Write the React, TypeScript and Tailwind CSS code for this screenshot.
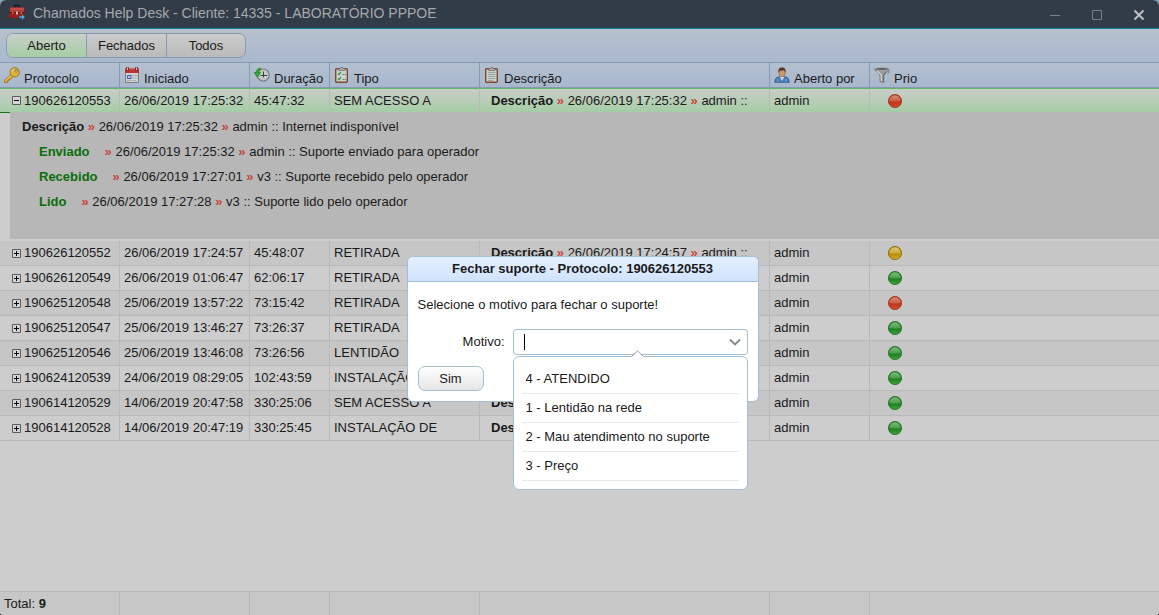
import React from 'react';

type Prio = 'red' | 'yellow' | 'green';

interface Ticket {
  id: string;
  start: string;
  duration: string;
  type: string;
  prio: Prio;
}

const tickets: Ticket[] = [
  { id: '190626120553', start: '26/06/2019 17:25:32', duration: '45:47:32', type: 'SEM ACESSO A', prio: 'red' },
  { id: '190626120552', start: '26/06/2019 17:24:57', duration: '45:48:07', type: 'RETIRADA', prio: 'yellow' },
  { id: '190626120549', start: '26/06/2019 01:06:47', duration: '62:06:17', type: 'RETIRADA', prio: 'green' },
  { id: '190625120548', start: '25/06/2019 13:57:22', duration: '73:15:42', type: 'RETIRADA', prio: 'red' },
  { id: '190625120547', start: '25/06/2019 13:46:27', duration: '73:26:37', type: 'RETIRADA', prio: 'green' },
  { id: '190625120546', start: '25/06/2019 13:46:08', duration: '73:26:56', type: 'LENTIDÃO', prio: 'green' },
  { id: '190624120539', start: '24/06/2019 08:29:05', duration: '102:43:59', type: 'INSTALAÇÃO DE', prio: 'green' },
  { id: '190614120529', start: '14/06/2019 20:47:58', duration: '330:25:06', type: 'SEM ACESSO A', prio: 'green' },
  { id: '190614120528', start: '14/06/2019 20:47:19', duration: '330:25:45', type: 'INSTALAÇÃO DE', prio: 'green' },
];

const history = [
  { label: 'Enviado', date: '26/06/2019 17:25:32', text: 'admin :: Suporte enviado para operador' },
  { label: 'Recebido', date: '26/06/2019 17:27:01', text: 'v3 :: Suporte recebido pelo operador' },
  { label: 'Lido', date: '26/06/2019 17:27:28', text: 'v3 :: Suporte lido pelo operador' },
];

const reasons = ['4 - ATENDIDO', '1 - Lentidão na rede', '2 - Mau atendimento no suporte', '3 - Preço'];

const Arrow = () => <b className="text-[#c8453c]">»</b>;

const ToolboxIcon = () => (
  <svg width="16" height="16" viewBox="0 0 16 16" aria-hidden="true">
    <path d="M5.500 4V2.500q0-1 1-1h3q1 0 1 1V4" fill="none" stroke="#10161c" strokeWidth="1.300" />
    <path d="M1 4.500q0-1 1-1h12q1 0 1 1V14H1z" fill="#a3201d" />
    <path d="M1 4.500q0-1 1-1h12q1 0 1 1V8H1z" fill="#bb3a33" />
    <path d="M1.500 5h13" stroke="#cd6a62" strokeWidth=".8" />
    <path d="M0 8.500h16" stroke="#5e1310" />
    <path d="M0 9.500h15.500v4H0z" fill="#9a1d1a" />
    <path d="M7 7.500h2v3H7z" fill="#c9bdbb" />
    <path d="M3 8h1.500v1.500H3zM11.500 8H13v1.500h-1.500z" fill="#c08a84" />
    <path d="M10 12h3v-2l3 3-3 3v-2h-3z" fill="#5aa9d6" stroke="#27506b" strokeWidth=".5" />
  </svg>
);

const KeyIcon = () => (
  <svg width="16" height="16" viewBox="0 0 16 16" aria-hidden="true">
    <path d="M7.300 7.200L.6 13.300v2.200h2.700v-1.500h1.500v-1.600h1.600l2.800-2.900z" fill="#d9aa2c" stroke="#94701a" strokeWidth=".8" />
    <circle cx="10.800" cy="5.200" r="4.600" fill="#deb43a" stroke="#94701a" strokeWidth=".9" />
    <path d="M7.700 5a3.200 3.200 0 013-2.900" stroke="#f0d67c" fill="none" />
    <circle cx="12.200" cy="3.900" r="1.400" fill="#b1bdd0" stroke="#94701a" strokeWidth=".7" />
    <path d="M1.500 13.600l6-5.500" stroke="#efd06c" strokeWidth=".8" />
  </svg>
);

const CalendarIcon = () => (
  <svg width="16" height="16" viewBox="0 0 16 16" aria-hidden="true">
    <path d="M1.500 2.500h13v13h-13z" fill="#d0d0d0" stroke="#7d7d7d" />
    <path d="M1 1.500h14V6H1z" fill="#b93431" />
    <path d="M1.500 2h13" stroke="#cf6560" strokeWidth=".8" />
    <path d="M3.500 0v3.500M12.500 0v3.500" stroke="#701d1b" strokeWidth="2.400" />
    <path d="M3.500 .5v2.500M12.500 .5v2.500" stroke="#d4c4c2" strokeWidth="1" />
    <path d="M3.500 8.500h3.500v3H3.500z" fill="#b8c8e4" stroke="#3a5cab" />
    <path d="M8.500 8.500h1M10.500 8.500h1M12.500 8.500h1M8.500 11h1M10.500 11h1M12.500 11h1M3.500 13.500h1M5.500 13.500h1M8.500 13.500h1M10.500 13.500h1" stroke="#8d8d8d" />
  </svg>
);

const HistoryIcon = () => (
  <svg width="16" height="16" viewBox="0 0 16 16" aria-hidden="true">
    <circle cx="9.200" cy="8" r="6" fill="#c7cccb" stroke="#747e7c" strokeWidth="1.200" />
    <circle cx="9.200" cy="8" r="4.300" fill="none" stroke="#a2aaa8" strokeWidth=".7" strokeDasharray="1 1.250" />
    <path d="M9.500 4.500v6M6.500 8.500h6.500" fill="none" stroke="#37413e" />
    <path d="M6.800 1C3.200 1.500 2.200 3.400 2.100 5.500H0l3.400 4.700 3.300-4.700H4.800c.1-1.500.6-2.400 2-3z" fill="#35a735" stroke="#187218" strokeWidth=".6" />
  </svg>
);

const ClipboardIcon = ({ checks }: { checks?: boolean }) => (
  <svg width="16" height="16" viewBox="0 0 16 16" aria-hidden="true">
    <rect x="1.700" y="1.700" width="11.600" height="13.600" rx="1" fill="#cbd0cd" stroke="#7a4930" strokeWidth="1.400" />
    <path d="M4.500 3.500V1.500h2L7 .5h1.500l.5 1h2v2z" fill="#aaa" stroke="#68645f" strokeWidth=".7" />
    {checks ? (
      <>
        <path d="M4 6.500l1 1 2-2.300M4 11.500l1 1 2-2.300" fill="none" stroke="#249d2a" strokeWidth="1.200" />
        <path d="M8.500 7.500H12M8.500 12.500H12" stroke="#777f7b" strokeDasharray="1.500 .5" />
      </>
    ) : (
      <path d="M4 5.500h7.500M4 7.500h7.500M4 9.500h7.500M4 11.500h7.500M4 13.500h5" stroke="#95a49c" strokeWidth=".9" />
    )}
  </svg>
);

const UserIcon = () => (
  <svg width="16" height="16" viewBox="0 0 16 16" aria-hidden="true">
    <path d="M.8 15.300c0-3.300 1.300-5 4.200-5.500h6c2.900.5 4.200 2.200 4.200 5.500z" fill="#477fb8" stroke="#285681" strokeWidth=".8" />
    <path d="M5.500 9.500L8 14l2.500-4.500z" fill="#d0d6dc" />
    <path d="M3.700 12v3M12.300 12v3" stroke="#79a5d1" />
    <ellipse cx="8" cy="5.700" rx="3.100" ry="4" fill="#cd9a6d" stroke="#8b5a33" strokeWidth=".6" />
    <path d="M4.500 6C3.800 2.300 5.300.4 8 .4s4.200 1.900 3.500 5.600c-.5-1.700-1-2.600-1.800-2.700-1.400.6-2.600.6-3.800.2C5.200 4 4.900 4.800 4.500 6z" fill="#513522" />
  </svg>
);

const FunnelIcon = () => (
  <svg width="16" height="16" viewBox="0 0 16 16" aria-hidden="true">
    <path d="M.5 2.500L6 8v6.500l3.800 1V8.200l5.200-5.700z" fill="#9a9a9a" stroke="#5b5b5b" strokeWidth=".7" />
    <path d="M3 4l4.300 4v6.300" stroke="#d9d9d9" strokeWidth="1.200" fill="none" />
    <path d="M12.500 4.500L9.300 8v6" stroke="#6c6c6c" strokeWidth=".8" fill="none" />
    <ellipse cx="7.900" cy="2" rx="7.300" ry="1.500" fill="#5f5f5f" stroke="#adadad" strokeWidth=".9" />
    <path d="M14.200 2.800c1.500 1.500 1 3.500-.7 3.700" stroke="#6c6c6c" strokeWidth=".8" fill="none" />
  </svg>
);

const balls: Record<Prio, [string, string, string, string]> = {
  red: ['#d98a74', '#bc3018', '#d44f2c', '#963321'],
  yellow: ['#dccb76', '#b88a00', '#d5ab18', '#806210'],
  green: ['#7cbd7c', '#1c7c20', '#3aa53a', '#246b27'],
};

const Ball = ({ prio }: { prio: Prio }) => {
  const [top, mid, low, edge] = balls[prio];
  return (
    <svg width="16" height="16" viewBox="0 0 16 16" role="img" aria-label={prio} className="block">
      <defs>
        <linearGradient id={'ball-' + prio} x2="0" y2="1">
          <stop offset="0" stopColor={low} />
          <stop offset="1" stopColor={low} />
        </linearGradient>
        <linearGradient id={'shine-' + prio} x2="0" y2="1">
          <stop offset="0" stopColor={top} />
          <stop offset="1" stopColor={top} stopOpacity=".45" />
        </linearGradient>
        <linearGradient id={'base-' + prio} x2="0" y2="1">
          <stop offset="0" stopColor={mid} />
          <stop offset=".5" stopColor={mid} />
          <stop offset="1" stopColor={low} />
        </linearGradient>
      </defs>
      <circle cx="8" cy="8" r="6.600" fill={'url(#base-' + prio + ')'} stroke={edge} strokeWidth=".8" />
      <path d="M2.200 8a5.800 5.800 0 0111.600 0Q8 9.200 2.200 8z" fill={'url(#shine-' + prio + ')'} />
    </svg>
  );
};

const Toggle = ({ open }: { open: boolean }) => (
  <button type="button" aria-label={open ? 'Recolher' : 'Expandir'} className="block">
    <svg width="9" height="9" viewBox="0 0 9 9" className="block">
      <path d="M.5.5h8v8h-8z" fill="#d4d4d4" stroke="#5c5c5c" />
      <path d={open ? 'M2 4.500h5' : 'M2 4.500h5M4.500 2v5'} stroke="#000" />
    </svg>
  </button>
);

const columns: { title: string; icon: React.ReactNode }[] = [
  { title: 'Protocolo', icon: <KeyIcon /> },
  { title: 'Iniciado', icon: <CalendarIcon /> },
  { title: 'Duração', icon: <HistoryIcon /> },
  { title: 'Tipo', icon: <ClipboardIcon checks /> },
  { title: 'Descrição', icon: <ClipboardIcon /> },
  { title: 'Aberto por', icon: <UserIcon /> },
  { title: 'Prio', icon: <FunnelIcon /> },
];

function TicketRow({ ticket, index }: { ticket: Ticket; index: number }) {
  const open = index === 0;
  const row = open
    ? 'h-6 bg-linear-to-b from-[#cccccc] to-[#a5cda5]'
    : index % 2
      ? 'h-[25px] bg-[#c6c6c6]'
      : 'h-[25px] bg-[#cdcdcd]';
  const edge = open ? 'border-t border-t-[#5fbb5f]' : 'border-b border-b-[#b9b9b9]';
  const cell = 'overflow-hidden whitespace-nowrap border-r border-r-[#b9b9b9] px-1 py-0 ' + edge;
  return (
    <tr className={row}>
      <td className={cell}>
        <div className="flex items-center gap-[3px] pl-2">
          <Toggle open={open} />
          {ticket.id}
        </div>
      </td>
      <td className={cell}>{ticket.start}</td>
      <td className={cell}>{ticket.duration}</td>
      <td className={cell}>{ticket.type}</td>
      <td className={cell}>
        <div className="pl-[7px]">
          <b>Descrição</b> <Arrow /> {ticket.start} <Arrow /> admin ::
        </div>
      </td>
      <td className={cell}>admin</td>
      <td className={'py-0 pl-[17px] ' + edge}>
        <Ball prio={ticket.prio} />
      </td>
    </tr>
  );
}

export default function App() {
  return (
    <div className="bg-linear-to-b from-[#7fa3bd] to-[#111111]">
      <div className="relative flex min-h-screen flex-col overflow-hidden rounded-t-md rounded-b-[3px] bg-[#cdcdcd] font-['Liberation_Sans',Arial,sans-serif] text-[13px] leading-4 text-[#1a1a1a]">
        <header className="flex h-[29px] items-center border-b border-[#0f7f95] bg-[#323c48] pb-1 pl-[9px] pr-3.5 text-[#a6a9ad]">
          <ToolboxIcon />
          <h1 className="ml-2 flex-1 pt-0.5 text-sm leading-4">Chamados Help Desk - Cliente: 14335 - LABORATÓRIO PPPOE</h1>
          <div className="flex items-center gap-[30px] pt-1.5">
            <button type="button" aria-label="Minimizar">
              <svg width="12" height="12" viewBox="0 0 12 12"><path d="M1 6.500h10" stroke="#7c8084" /></svg>
            </button>
            <button type="button" aria-label="Maximizar">
              <svg width="12" height="12" viewBox="0 0 12 12"><path d="M1.500 1.500h9v9h-9z" fill="none" stroke="#7c8084" /></svg>
            </button>
            <button type="button" aria-label="Fechar">
              <svg width="12" height="12" viewBox="0 0 12 12"><path d="M1.500 1.500l9 9M10.500 1.500l-9 9" stroke="#bdbfc1" strokeWidth="2" /></svg>
            </button>
          </div>
        </header>

        <nav className="bg-linear-to-b from-[#b6c1cd] to-[#aab8cd] px-1.5 py-1">
          <div className="flex h-[25px] w-60 overflow-hidden rounded-[7px] border border-[#859bb1] bg-linear-to-b from-[#cccccc] to-[#bababa]">
            <button type="button" className="w-20 border-r border-[#859bb1] bg-linear-to-b from-[#c9cfc9] to-[#a5cda5]">Aberto</button>
            <button type="button" className="w-20 border-r border-[#859bb1]">Fechados</button>
            <button type="button" className="flex-1">Todos</button>
          </div>
        </nav>

        <table className="w-full table-fixed border-separate border-spacing-0 text-left">
          <colgroup>
            <col className="w-[120px]" />
            <col className="w-[130px]" />
            <col className="w-20" />
            <col className="w-[150px]" />
            <col className="w-[290px]" />
            <col className="w-[100px]" />
            <col />
          </colgroup>
          <thead>
            <tr className="h-[26px] bg-linear-to-b from-[#b3c0cf] to-[#a9b7cd]">
              {columns.map((c) => (
                <th key={c.title} className="border-y border-r border-[#859bb1] p-0 pl-1 align-bottom font-normal last:border-r-0">
                  <div className="flex gap-1 whitespace-nowrap">
                    {c.icon}
                    <span className="pt-1">{c.title}</span>
                  </div>
                </th>
              ))}
            </tr>
          </thead>
          <tbody>
            <TicketRow ticket={tickets[0]} index={0} />
            <tr>
              <td colSpan={7} className="p-0">
                <div className="flex pb-0.5">
                  <div className="w-2.5 border-t border-[#0b7a0b]" />
                  <div className="h-[127px] flex-1 bg-[#b7b7b7] pl-3 pt-0.5 leading-[25px]">
                    <p><b>Descrição</b> <Arrow /> 26/06/2019 17:25:32 <Arrow /> admin :: Internet indisponível</p>
                    {history.map((h) => (
                      <p key={h.label} className="pl-[17px]">
                        <b className="mr-[15px] text-[#0a6e0a]">{h.label}</b>
                        <Arrow /> {h.date} <Arrow /> {h.text}
                      </p>
                    ))}
                  </div>
                </div>
              </td>
            </tr>
            {tickets.slice(1).map((t, i) => (
              <TicketRow key={t.id} ticket={t} index={i + 1} />
            ))}
          </tbody>
        </table>

        <div className="flex-1" />

        <footer className="grid h-6 grid-cols-[120px_130px_80px_150px_290px_100px_1fr] divide-x divide-[#b9b9b9] border-t border-[#b9b9b9] bg-[#c7c7c7]">
          <div className="pl-1 pt-1">Total: <b>9</b></div>
          <div /><div /><div /><div /><div /><div />
        </footer>

        <section role="dialog" aria-labelledby="dialog-title" className="absolute left-[calc(50%-173px)] top-64 w-[352px] rounded-md border border-[#a4bed4] bg-white">
          <h2 id="dialog-title" className="rounded-t-md border-b border-[#a4bed4] bg-linear-to-b from-[#e5f0ff] to-[#d0e3fd] py-1 text-center font-bold">
            Fechar suporte - Protocolo: 190626120553
          </h2>
          <form className="px-2.5 pb-2.5 pt-[15px]">
            <p>Selecione o motivo para fechar o suporte!</p>
            <div className="mt-4 flex items-center justify-end gap-2">
              <label htmlFor="motivo">Motivo:</label>
              <div className="relative w-[235px]">
                <input id="motivo" type="text" role="combobox" aria-expanded="true" aria-controls="motivos" className="block h-[26px] w-full rounded-[3px] border border-[#a4bed4] bg-white pl-2.5 pr-6 outline-none" />
                <span className="absolute left-[11px] top-[5px] h-4 w-px bg-black" />
                <svg width="12" height="8" viewBox="0 0 12 8" className="absolute right-[7px] top-[9px]" aria-hidden="true">
                  <path d="M1 1.500l5 5 5-5" fill="none" stroke="#858585" strokeWidth="1.800" />
                </svg>
                <div className="absolute left-0 top-[27px] w-full rounded-md border border-[#a4bed4] bg-white p-2">
                  <svg width="14" height="8" viewBox="0 0 14 8" className="absolute -top-[7px] left-[117px]" aria-hidden="true">
                    <path d="M1 7l6-6 6 6v1H1z" fill="#fff" />
                    <path d="M.5 6.500L6.500.8l6 5.700" fill="none" stroke="#999" />
                  </svg>
                  <ul id="motivos" role="listbox">
                    {reasons.map((r) => (
                      <li key={r} role="option" aria-selected="false" className="h-[29px] border-b border-[#e8e8e8] px-1 pt-1.5">{r}</li>
                    ))}
                  </ul>
                </div>
              </div>
            </div>
            <button type="button" className="mt-[11px] block h-[25px] w-[66px] rounded-[7px] border border-[#a4bed4] bg-linear-to-b from-white to-[#e6e6e6]">Sim</button>
          </form>
        </section>
      </div>
    </div>
  );
}
